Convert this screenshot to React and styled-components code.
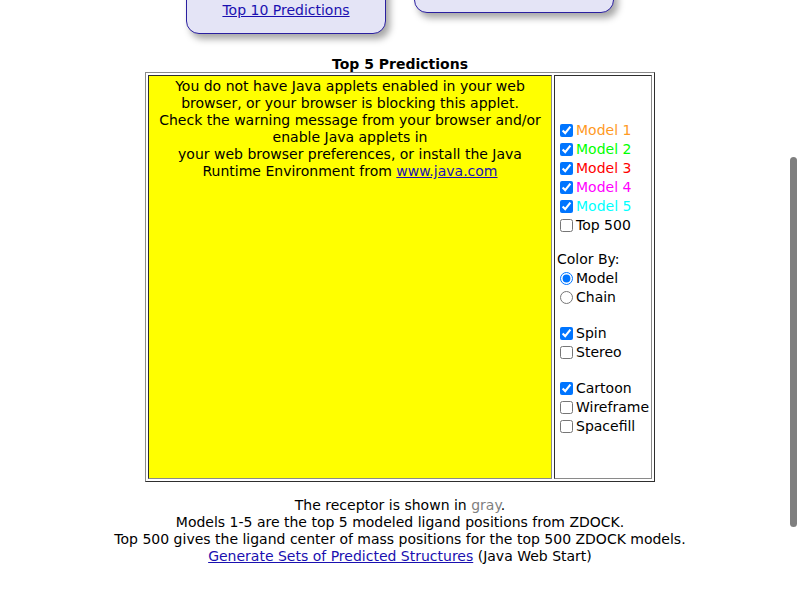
import React from "react";
import styled, { createGlobalStyle } from "styled-components";

const GlobalStyle = createGlobalStyle`
  html, body {
    margin: 0;
    padding: 0;
    height: 600px;
    overflow: hidden;
    background: #ffffff;
  }
  body {
    font-family: "DejaVu Sans", Verdana, sans-serif;
    font-size: 14px;
    line-height: 17px;
    color: #000000;
  }
  a {
    color: #1a10b0;
    text-decoration: underline;
  }
`;

// Page column, everything centred
const Page = styled.div`
  display: flex;
  flex-direction: column;
  align-items: center;
`;

// Navigation boxes at the top (page is scrolled, so they are cut off)
const NavRow = styled.div`
  display: flex;
  align-items: flex-start;
  gap: 28px;
  margin-top: -86px;
`;

const NavBox = styled.div`
  box-sizing: border-box;
  width: 200px;
  height: ${(p) => p.$height}px;
  display: flex;
  flex-direction: column;
  justify-content: flex-end;
  align-items: center;
  padding-bottom: 14px;
  background: #e4e4f6;
  border: 1px solid #2a1fa0;
  border-radius: 13px;
  box-shadow: 4px 5px 7px rgba(0, 0, 0, 0.35);
`;

const Title = styled.div`
  margin-top: 22px;
  margin-bottom: -1px;
  font-weight: bold;
  text-align: center;
`;

// Viewer table with classic outset / inset borders
const ViewerTable = styled.table`
  border-spacing: 2px;
  border: 1px solid;
  border-color: #8a8a8a #2e2e2e #2e2e2e #8a8a8a;
`;

const Cell = styled.td`
  padding: ${(p) => (p.$pad ? "1px" : "0")};
  vertical-align: ${(p) => (p.$middle ? "middle" : "top")};
  border: 1px solid;
  border-color: #2e2e2e #8a8a8a #8a8a8a #2e2e2e;
`;

const Applet = styled.div`
  box-sizing: border-box;
  width: 402px;
  height: 402px;
  padding-top: 2px;
  background: #ffff00;
  text-align: center;
`;

const Controls = styled.div`
  width: 94px;
  padding-top: 2px;
  display: flex;
  flex-direction: column;
`;

const Group = styled.div`
  display: flex;
  flex-direction: column;
  margin-top: ${(p) => p.$gap || 0}px;
`;

const Option = styled.label`
  height: 19px;
  display: flex;
  align-items: center;
  white-space: nowrap;
  color: ${(p) => p.$color || "#000000"};

  input {
    width: 13px;
    height: 13px;
    margin: 0 3px 0 4px;
  }
`;

const GroupLabel = styled.div`
  height: 19px;
  display: flex;
  align-items: center;
  padding-left: 1px;
`;

const Notes = styled.div`
  margin-top: 15px;
  text-align: center;
`;

const Gray = styled.span`
  color: #808080;
`;

// macOS overlay scrollbar thumb sitting over the page
const ScrollThumb = styled.div`
  position: fixed;
  right: 3px;
  top: 157px;
  width: 7px;
  height: 370px;
  border-radius: 4px;
  background: #7f7f7f;
`;

const models = [
  { label: "Model 1", color: "#ff9a1f" },
  { label: "Model 2", color: "#00ff00" },
  { label: "Model 3", color: "#ff0000" },
  { label: "Model 4", color: "#ff00ff" },
  { label: "Model 5", color: "#00ffff" },
];

const Check = ({ label, color, checked }) => (
  <Option $color={color}>
    <input type="checkbox" defaultChecked={checked} />
    {label}
  </Option>
);

const Radio = ({ label, checked }) => (
  <Option>
    <input type="radio" name="colorby" defaultChecked={checked} />
    {label}
  </Option>
);

const App = () => {
  return (
    <>
      <GlobalStyle />
      <Page>
        <NavRow>
          <NavBox $height={120}>
            <a href="#top10">Top 10 Predictions</a>
          </NavBox>
          <NavBox $height={99} />
        </NavRow>

        <Title>Top 5 Predictions</Title>

        <ViewerTable>
          <tbody>
            <tr>
              <Cell>
                <Applet>
                  You do not have Java applets enabled in your web
                  <br />
                  browser, or your browser is blocking this applet.
                  <br />
                  Check the warning message from your browser and/or
                  <br />
                  enable Java applets in
                  <br />
                  your web browser preferences, or install the Java
                  <br />
                  Runtime Environment from <a href="#java">www.java.com</a>
                </Applet>
              </Cell>
              <Cell $pad $middle>
                <Controls>
                  <Group>
                    {models.map((m) => (
                      <Check key={m.label} label={m.label} color={m.color} checked />
                    ))}
                    <Check label="Top 500" />
                  </Group>
                  <Group $gap={15}>
                    <GroupLabel>Color By:</GroupLabel>
                    <Radio label="Model" checked />
                    <Radio label="Chain" />
                  </Group>
                  <Group $gap={17}>
                    <Check label="Spin" checked />
                    <Check label="Stereo" />
                  </Group>
                  <Group $gap={17}>
                    <Check label="Cartoon" checked />
                    <Check label="Wireframe" />
                    <Check label="Spacefill" />
                  </Group>
                </Controls>
              </Cell>
            </tr>
          </tbody>
        </ViewerTable>

        <Notes>
          The receptor is shown in <Gray>gray</Gray>.
          <br />
          Models 1-5 are the top 5 modeled ligand positions from ZDOCK.
          <br />
          Top 500 gives the ligand center of mass positions for the top 500 ZDOCK models.
          <br />
          <a href="#generate">Generate Sets of Predicted Structures</a> (Java Web Start)
        </Notes>
      </Page>
      <ScrollThumb />
    </>
  );
};

export default App;
